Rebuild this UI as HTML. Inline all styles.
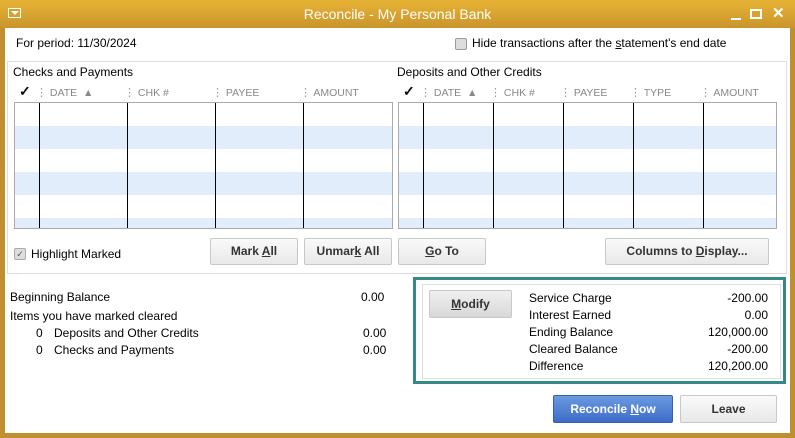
<!DOCTYPE html>
<html><head><style>
*{box-sizing:border-box;margin:0;padding:0}
body{width:795px;height:438px;overflow:hidden;font-family:"Liberation Sans",sans-serif;font-size:12px;color:#000;background:#c09030;position:relative}
.a{position:absolute}
#title{left:0;top:0;width:795px;height:28px;background:linear-gradient(#e7b335,#c9952c);}
#title .t{left:0;width:795px;top:6px;text-align:center;color:#fff;font-size:14px}
#body{left:5px;top:28px;width:785px;height:405px;background:#fff}
.panel{border:1px solid #ddd}
.grid{border:1px solid #aaa;background:repeating-linear-gradient(#fff 0,#fff 23px,#e2edfb 23px,#e2edfb 46px)}
.vl{position:absolute;top:0;bottom:0;width:1px;background:#000}
.hd{font-size:10.5px;color:#888;top:86px}
.dots{color:#999;font-size:11px}
.chk{font-size:14px;font-weight:bold;top:83px}
.btn{position:absolute;border:1px solid #c8c8c8;border-radius:2px;background:linear-gradient(#fafafa,#e8e8e8);text-align:center;font-weight:bold;color:#333;font-size:12px}
u{text-decoration:underline}
</style></head><body>
<div id="title" class="a">
 <div class="a" style="left:8px;top:8px;width:13px;height:10px;border:1px solid #fff;background:#d9a030"></div>
 <div class="a" style="left:11px;top:11px;width:0;height:0;border-left:4px solid transparent;border-right:4px solid transparent;border-top:4px solid #fff"></div>
 <div class="t a">Reconcile - My Personal Bank</div>
 <div class="a" style="left:731px;top:18px;width:10px;height:2px;background:#fff"></div>
 <div class="a" style="left:750px;top:9px;width:12px;height:10px;border:2px solid #fff"></div>
 <div class="a" style="left:772px;top:4px;color:#fff;font-size:15px;font-weight:bold">✕</div>
</div>
<div id="body" class="a"></div>
<div class="a" style="left:16px;top:36px">For period: 11/30/2024</div>
<div class="a" style="left:455px;top:38px;width:12px;height:12px;border:1px solid #999;border-radius:2px;background:#ddd"></div>
<div class="a" style="left:472px;top:36px">Hide transactions after the <u>s</u>tatement's end date</div>
<div class="a panel" style="left:7px;top:61px;width:780px;height:213px"></div>
<div class="a" style="left:13px;top:65px">Checks and Payments</div>
<div class="a" style="left:397px;top:65px">Deposits and Other Credits</div>
<div class="a chk" style="left:19px">✓</div>
<div class="a hd" style="left:36px"><span class="dots">⋮</span> DATE &nbsp;▲</div>
<div class="a hd" style="left:124px"><span class="dots">⋮</span> CHK #</div>
<div class="a hd" style="left:212px"><span class="dots">⋮</span> PAYEE</div>
<div class="a hd" style="left:300px"><span class="dots">⋮</span> AMOUNT</div>
<div class="a chk" style="left:403px">✓</div>
<div class="a hd" style="left:420px"><span class="dots">⋮</span> DATE &nbsp;▲</div>
<div class="a hd" style="left:490px"><span class="dots">⋮</span> CHK #</div>
<div class="a hd" style="left:560px"><span class="dots">⋮</span> PAYEE</div>
<div class="a hd" style="left:630px"><span class="dots">⋮</span> TYPE</div>
<div class="a hd" style="left:700px"><span class="dots">⋮</span> AMOUNT</div>
<div class="a grid" style="left:14px;top:102px;width:379px;height:127px">
 <div class="vl" style="left:24px"></div><div class="vl" style="left:112px"></div><div class="vl" style="left:200px"></div><div class="vl" style="left:288px"></div>
</div>
<div class="a grid" style="left:398px;top:102px;width:379px;height:127px">
 <div class="vl" style="left:24px"></div><div class="vl" style="left:94px"></div><div class="vl" style="left:164px"></div><div class="vl" style="left:234px"></div><div class="vl" style="left:304px"></div>
</div>
<div class="a" style="left:14px;top:248px;width:12px;height:12px;border:1px solid #aaa;border-radius:2px;background:#ddd;font-size:9px;color:#555;text-align:center;line-height:10px">✓</div>
<div class="a" style="left:31px;top:247px">Highlight Marked</div>
<div class="btn" style="left:210px;top:238px;width:88px;height:27px;line-height:25px">Mark <u>A</u>ll</div>
<div class="btn" style="left:304px;top:238px;width:88px;height:27px;line-height:25px">Unmar<u>k</u> All</div>
<div class="btn" style="left:398px;top:238px;width:88px;height:27px;line-height:25px"><u>G</u>o To</div>
<div class="btn" style="left:605px;top:238px;width:164px;height:27px;line-height:25px">Columns to <u>D</u>isplay...</div>
<div class="a" style="left:10px;top:290px">Beginning Balance</div><div class="a" style="left:361px;top:290px">0.00</div>
<div class="a" style="left:10px;top:309px">Items you have marked cleared</div>
<div class="a" style="left:36px;top:326px">0</div><div class="a" style="left:54px;top:326px">Deposits and Other Credits</div><div class="a" style="left:363px;top:326px">0.00</div>
<div class="a" style="left:36px;top:343px">0</div><div class="a" style="left:54px;top:343px">Checks and Payments</div><div class="a" style="left:363px;top:343px">0.00</div>
<div class="a" style="left:413px;top:277px;width:373px;height:107px;border:3px solid #378985"></div>
<div class="a" style="left:422px;top:284px;width:359px;height:95px;border:1px solid #ddd"></div>
<div class="btn" style="left:429px;top:290px;width:83px;height:28px;line-height:26px;background:linear-gradient(#f0f0f0,#d8d8d8)"><u>M</u>odify</div>
<div class="a" style="left:529px;top:290px;line-height:17px">Service Charge<br>Interest Earned<br>Ending Balance<br>Cleared Balance<br>Difference</div>
<div class="a" style="left:668px;top:290px;width:100px;text-align:right;line-height:17px">-200.00<br>0.00<br>120,000.00<br>-200.00<br>120,200.00</div>
<div class="btn" style="left:553px;top:395px;width:120px;height:28px;line-height:26px;background:linear-gradient(#6a9ae0,#3d6cc8);border-color:#3a5fa8;color:#fff">Reconcile <u>N</u>ow</div>
<div class="btn" style="left:680px;top:395px;width:97px;height:28px;line-height:26px">Leave</div>
</body></html>
